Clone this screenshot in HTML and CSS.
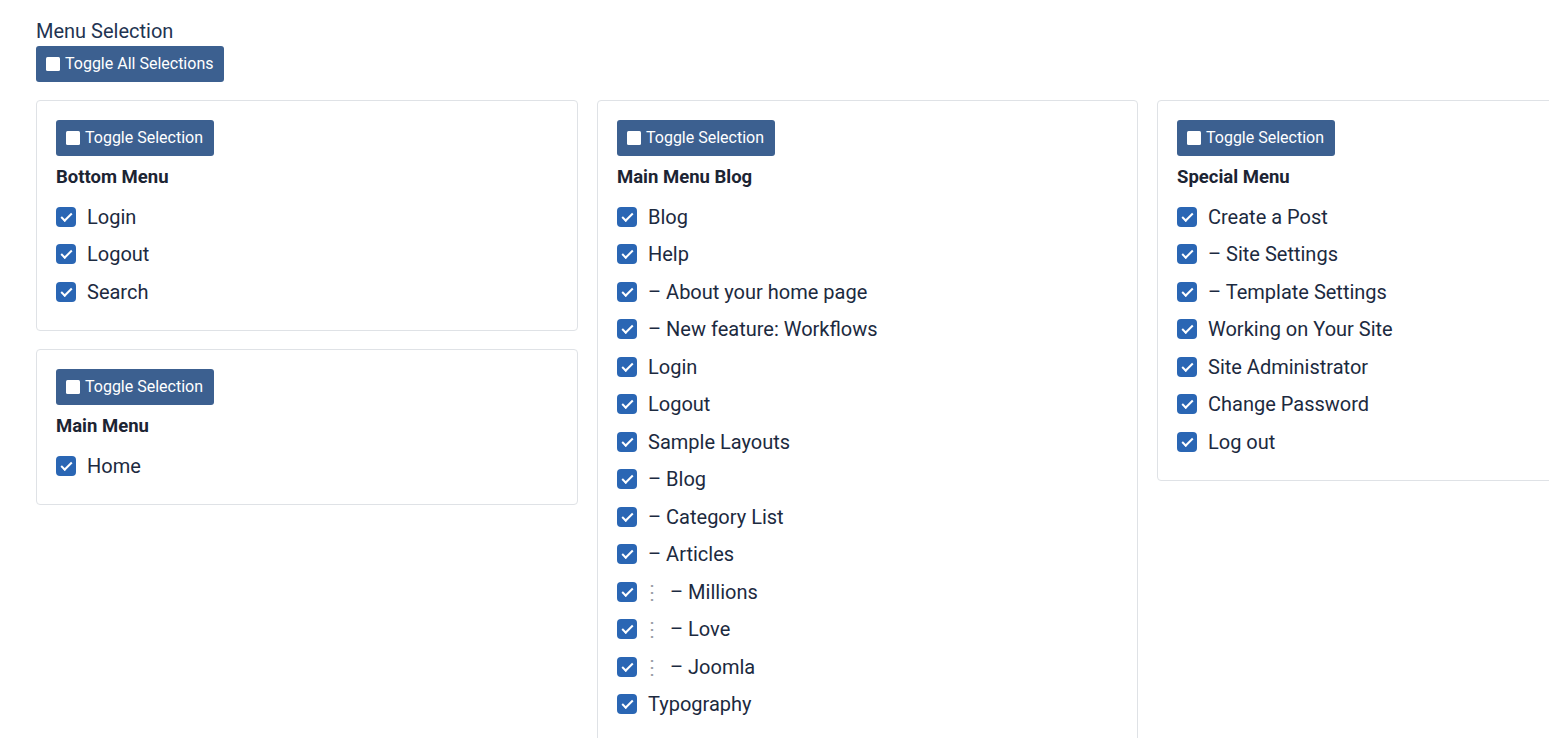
FILE: index.html
```html
<!DOCTYPE html>
<html lang="en">
<head>
<meta charset="utf-8">
<title>Menu Selection</title>
<link rel="stylesheet" href="styles.css">
</head>
<body>
<div class="page">
  <div class="label">Menu Selection</div>
  <button class="btn btn-all" type="button"><span class="sq"></span>Toggle All Selections</button>

  <div class="grid">
    <div class="col">
      <div class="card">
        <button class="btn" type="button"><span class="sq"></span>Toggle Selection</button>
        <h3 class="title">Bottom Menu</h3>
        <ul class="list">
          <li><span class="cb"></span><span class="txt">Login</span></li>
          <li><span class="cb"></span><span class="txt">Logout</span></li>
          <li><span class="cb"></span><span class="txt">Search</span></li>
        </ul>
      </div>
      <div class="card">
        <button class="btn" type="button"><span class="sq"></span>Toggle Selection</button>
        <h3 class="title">Main Menu</h3>
        <ul class="list">
          <li><span class="cb"></span><span class="txt">Home</span></li>
        </ul>
      </div>
    </div>

    <div class="col">
      <div class="card">
        <button class="btn" type="button"><span class="sq"></span>Toggle Selection</button>
        <h3 class="title">Main Menu Blog</h3>
        <ul class="list">
          <li><span class="cb"></span><span class="txt">Blog</span></li>
          <li><span class="cb"></span><span class="txt">Help</span></li>
          <li><span class="cb"></span><span class="txt">– About your home page</span></li>
          <li><span class="cb"></span><span class="txt">– New feature: Workflows</span></li>
          <li><span class="cb"></span><span class="txt">Login</span></li>
          <li><span class="cb"></span><span class="txt">Logout</span></li>
          <li><span class="cb"></span><span class="txt">Sample Layouts</span></li>
          <li><span class="cb"></span><span class="txt">– Blog</span></li>
          <li><span class="cb"></span><span class="txt">– Category List</span></li>
          <li><span class="cb"></span><span class="txt">– Articles</span></li>
          <li><span class="cb"></span><span class="txt"><span class="dots">⋮</span>– Millions</span></li>
          <li><span class="cb"></span><span class="txt"><span class="dots">⋮</span>– Love</span></li>
          <li><span class="cb"></span><span class="txt"><span class="dots">⋮</span>– Joomla</span></li>
          <li><span class="cb"></span><span class="txt">Typography</span></li>
        </ul>
      </div>
    </div>

    <div class="col">
      <div class="card">
        <button class="btn" type="button"><span class="sq"></span>Toggle Selection</button>
        <h3 class="title">Special Menu</h3>
        <ul class="list">
          <li><span class="cb"></span><span class="txt">Create a Post</span></li>
          <li><span class="cb"></span><span class="txt">– Site Settings</span></li>
          <li><span class="cb"></span><span class="txt">– Template Settings</span></li>
          <li><span class="cb"></span><span class="txt">Working on Your Site</span></li>
          <li><span class="cb"></span><span class="txt">Site Administrator</span></li>
          <li><span class="cb"></span><span class="txt">Change Password</span></li>
          <li><span class="cb"></span><span class="txt">Log out</span></li>
        </ul>
      </div>
    </div>
  </div>
</div>
</body>
</html>
```

FILE: styles.css
```css
html, body {
  margin: 0;
  padding: 0;
  background: #fff;
  overflow: hidden;
}
body {
  font-family: Roboto, "Liberation Sans", Arial, sans-serif;
  color: #1c2a40;
}
.page {
  padding: 19px 0 0 36px;
  width: 1700px;
}
.label {
  font-size: 20px;
  line-height: 24px;
  color: #1f3452;
  margin-bottom: 3px;
}
.btn {
  display: inline-flex;
  align-items: center;
  height: 36px;
  padding: 0 11px 0 10px;
  border: 0;
  border-radius: 3px;
  background: #3c6090;
  color: #fff;
  font-family: inherit;
  font-size: 16px;
  line-height: 1;
  cursor: pointer;
}
.sq {
  display: inline-block;
  width: 14px;
  height: 14px;
  background: #fff;
  border-radius: 1.5px;
  margin-right: 5px;
}
.grid {
  display: grid;
  grid-template-columns: 542px 541px 542px;
  column-gap: 19px;
  margin-top: 18px;
  align-items: start;
}
.col {
  display: flex;
  flex-direction: column;
  gap: 18px;
}
.card {
  border: 1px solid #dfe2e6;
  border-radius: 4px;
  padding: 19px 19px 19.5px;
}
.title {
  margin: 11px 0 11px;
  font-size: 18.5px;
  line-height: 20px;
  font-weight: 700;
  color: #1c2433;
}
.list {
  list-style: none;
  margin: 0;
  padding: 0;
}
.list li {
  display: flex;
  align-items: center;
  height: 37.5px;
}
.cb {
  position: relative;
  flex: 0 0 20px;
  width: 20px;
  height: 20px;
  border-radius: 4px;
  background: #2a66b4;
  margin-right: 11px;
}
.cb::after {
  content: "";
  position: absolute;
  border-left: 2.5px solid #fff;
  border-bottom: 2.5px solid #fff;
  transform: rotate(-45deg);
  transform-origin: center;
  box-sizing: border-box;
  width: 11px;
  height: 6px;
  left: 4.5px;
  top: 6px;
}
.txt {
  font-size: 20px;
  line-height: 24px;
  color: #1c2a40;
  white-space: nowrap;
}
.dots {
  position: relative;
  left: -6px;
  color: #9aa0a6;
  display: inline-block;
  width: 22px;
}
```
